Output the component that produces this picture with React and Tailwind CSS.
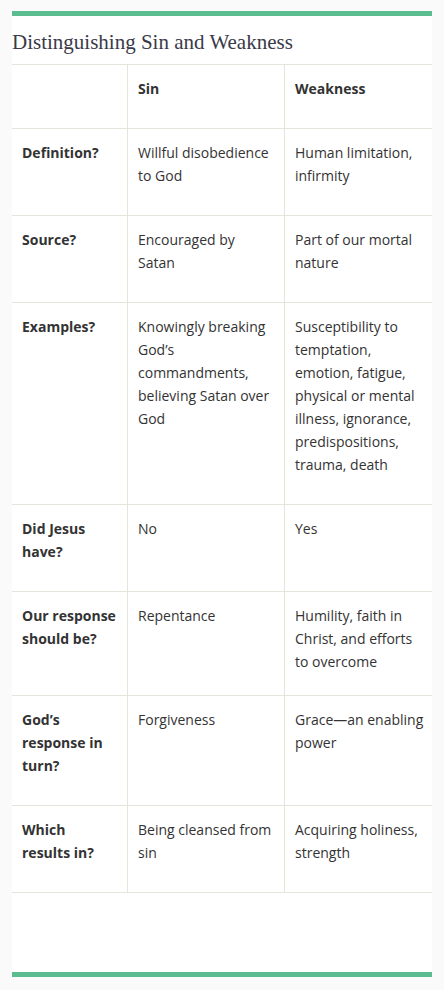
const rows = [
  { label: "Definition?", sin: "Willful disobedience to God", weak: "Human limitation, infirmity" },
  { label: "Source?", sin: "Encouraged by Satan", weak: "Part of our mortal nature" },
  {
    label: "Examples?",
    sin: "Knowingly breaking God’s commandments, believing Satan over God",
    weak: "Susceptibility to temptation, emotion, fatigue, physical or mental illness, ignorance, predispositions, trauma, death",
  },
  { label: "Did Jesus have?", sin: "No", weak: "Yes" },
  { label: "Our response should be?", sin: "Repentance", weak: "Humility, faith in Christ, and efforts to overcome", tight: true },
  { label: "God’s response in turn?", sin: "Forgiveness", weak: "Grace—an enabling power" },
  { label: "Which results in?", sin: "Being cleansed from sin", weak: "Acquiring holiness, strength" },
];

const TableRow = ({ label, sin, weak, tight, header }) => {
  const pad = `pl-[10px] pr-[10px] pt-[12px] ${tight ? "pb-[22px]" : "pb-[28px]"}`;
  return (
    <div className="grid grid-cols-[115px_157px_150px] border-b border-[#e7e4da]">
      <div className={`${pad} font-bold`}>{label}</div>
      <div className={`${pad} pr-[11px] border-l border-[#e7e4da] ${header ? "font-bold" : ""}`}>{sin}</div>
      <div className={`${pad} border-l border-[#e7e4da] ${header ? "font-bold" : ""}`}>{weak}</div>
    </div>
  );
};

export default function App() {
  return (
    <div className="min-h-screen bg-[#fafafa] px-[12px] pt-[11px]">
      <div className="bg-white">
        <div className="h-[5px] bg-[#5bbd8f]" />
        <h2 className="mt-[12px] mb-[8px] text-[21px] leading-[28px] text-[#3a3a48] font-['Liberation_Serif',serif]">
          Distinguishing Sin and Weakness
        </h2>
        <div className="border-t border-[#e7e4da] text-[14px] leading-[23px] text-[#333] font-['Open_Sans',sans-serif]">
          <TableRow label="" sin="Sin" weak="Weakness" header />
          {rows.map((r) => (
            <TableRow key={r.label} {...r} />
          ))}
        </div>
        <div className="h-[79px]" />
        <div className="h-[5px] bg-[#5bbd8f]" />
      </div>
    </div>
  );
}
